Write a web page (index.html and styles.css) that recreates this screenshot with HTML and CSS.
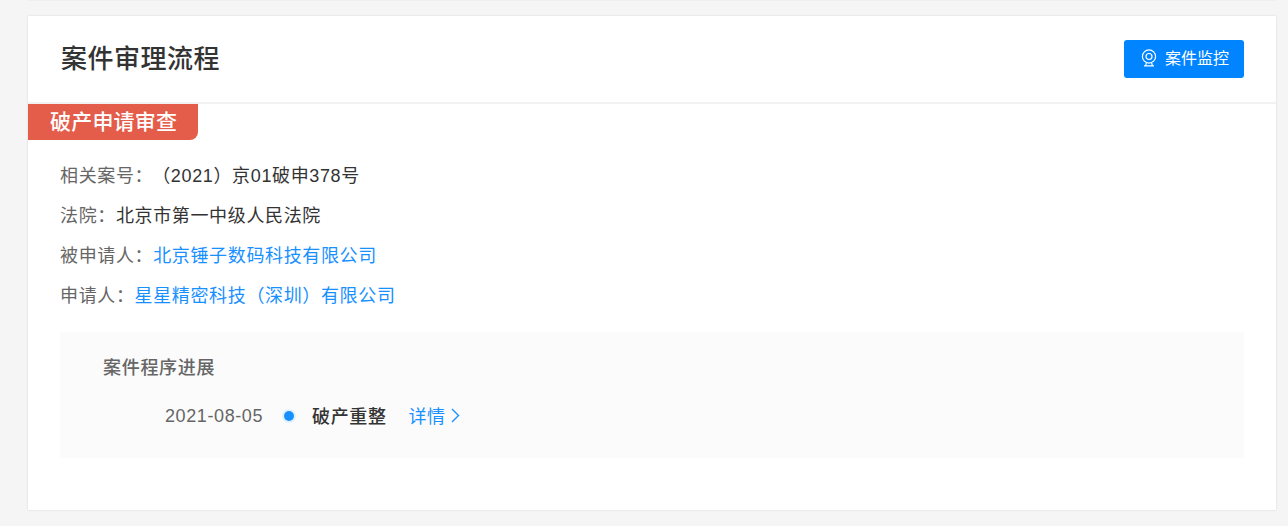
FILE: index.html
```html
<!DOCTYPE html>
<html lang="zh-CN">
<head>
    <meta charset="UTF-8">
    <title>案件审理流程</title>
    <link rel="stylesheet" href="styles.css">
</head>
<body>
    <div class="top-strip"></div>

    <div class="card">
        <div class="card-header">
            <h2>案件审理流程</h2>
            <button class="monitor-button">
                <svg class="monitor-icon" width="16" height="18" viewBox="0 0 16 18" fill="none" stroke="#fff" stroke-width="1.2">
                    <circle cx="8" cy="7.5" r="6.6"/>
                    <circle cx="8" cy="7.5" r="3"/>
                    <path d="M5.4 14 4.6 16.6M10.6 14l.8 2.6M3 16.8h10"/>
                </svg>
                <span class="monitor-text">案件监控</span>
            </button>
        </div>

        <div class="stage-tag">破产申请审查</div>

        <div class="info-list">
            <div class="info-row"><span class="info-label">相关案号：</span><span class="case-no">（2021）京01破申378号</span></div>
            <div class="info-row"><span class="info-label">法院：</span>北京市第一中级人民法院</div>
            <div class="info-row"><span class="info-label">被申请人：</span><a href="#">北京锤子数码科技有限公司</a></div>
            <div class="info-row"><span class="info-label">申请人：</span><a href="#">星星精密科技（深圳）有限公司</a></div>
        </div>

        <div class="progress-box">
            <h4>案件程序进展</h4>
            <div class="progress-row">
                <span class="progress-date">2021-08-05</span>
                <span class="progress-dot"></span>
                <span class="progress-name">破产重整</span>
                <a href="#" class="progress-link">详情
                    <svg width="9" height="15" viewBox="0 0 9 15" fill="none" stroke="#1890ff" stroke-width="1.4"><path d="M1 1l6.5 6.5L1 14"/></svg>
                </a>
            </div>
        </div>
    </div>
</body>
</html>
```

FILE: styles.css
```css
body {
    margin: 0;
    padding: 0 12px 16px 28px;
    background-color: #f5f5f5;
    font-family: "Liberation Sans", "Noto Sans CJK SC", sans-serif;
    color: #333;
}

a {
    color: #1890ff;
    text-decoration: none;
}

.top-strip {
    height: 1px;
    margin-bottom: 15px;
    background-color: #eee;
}

.card {
    height: 494px;
    box-sizing: border-box;
    background-color: #fff;
    box-shadow: 0 0 2px rgba(0, 0, 0, 0.12);
}

.card-header {
    display: flex;
    align-items: center;
    justify-content: space-between;
    height: 88px;
    box-sizing: border-box;
    padding: 0 32px 0 33px;
    border-bottom: 2px solid #f2f2f2;
}

.card-header h2 {
    margin: 0;
    font-size: 26px;
    font-weight: 500;
    line-height: 36px;
    letter-spacing: 0.5px;
}

.monitor-button {
    display: flex;
    align-items: center;
    justify-content: center;
    width: 120px;
    height: 38px;
    padding: 0 0 2px 2px;
    border: none;
    border-radius: 3px;
    background-color: #0084ff;
    color: #fff;
    font-family: inherit;
    font-size: 16px;
    cursor: pointer;
}

.monitor-icon {
    margin-right: 8px;
}

.monitor-text {
    margin-top: -2px;
}

.stage-tag {
    width: 170px;
    height: 36px;
    box-sizing: border-box;
    padding-left: 22px;
    background-color: #e45c4a;
    border-bottom-right-radius: 8px;
    color: #fff;
    font-size: 21px;
    font-weight: 500;
    line-height: 36px;
    letter-spacing: 0.2px;
}

.info-list {
    padding: 16px 32px 0;
}

.info-row {
    height: 40px;
    font-size: 18px;
    line-height: 40px;
    letter-spacing: 0.64px;
    white-space: nowrap;
}

.info-label {
    color: #666;
}

.case-no {
    margin-left: 8px;
}

.progress-box {
    height: 126px;
    box-sizing: border-box;
    margin: 16px 32px 0;
    padding: 21px 43px;
    background-color: #fbfbfb;
}

.progress-box h4 {
    margin: 0;
    color: #666;
    font-size: 18px;
    font-weight: 500;
    line-height: 30px;
    letter-spacing: 0.7px;
}

.progress-row {
    display: flex;
    align-items: center;
    height: 36px;
    margin-top: 14px;
    padding-left: 62px;
    font-size: 18px;
    letter-spacing: 0.6px;
}

.progress-date {
    color: #666;
    margin-top: 2px;
}

.progress-dot {
    width: 10px;
    height: 10px;
    margin: 2px 18px 0 21px;
    border-radius: 50%;
    background-color: #1890ff;
    box-shadow: 0 0 0 2px #e3f0fd;
}

.progress-name {
    font-weight: 500;
    margin-right: 22px;
}

.progress-link {
    display: flex;
    align-items: center;
    gap: 5px;
}
```
